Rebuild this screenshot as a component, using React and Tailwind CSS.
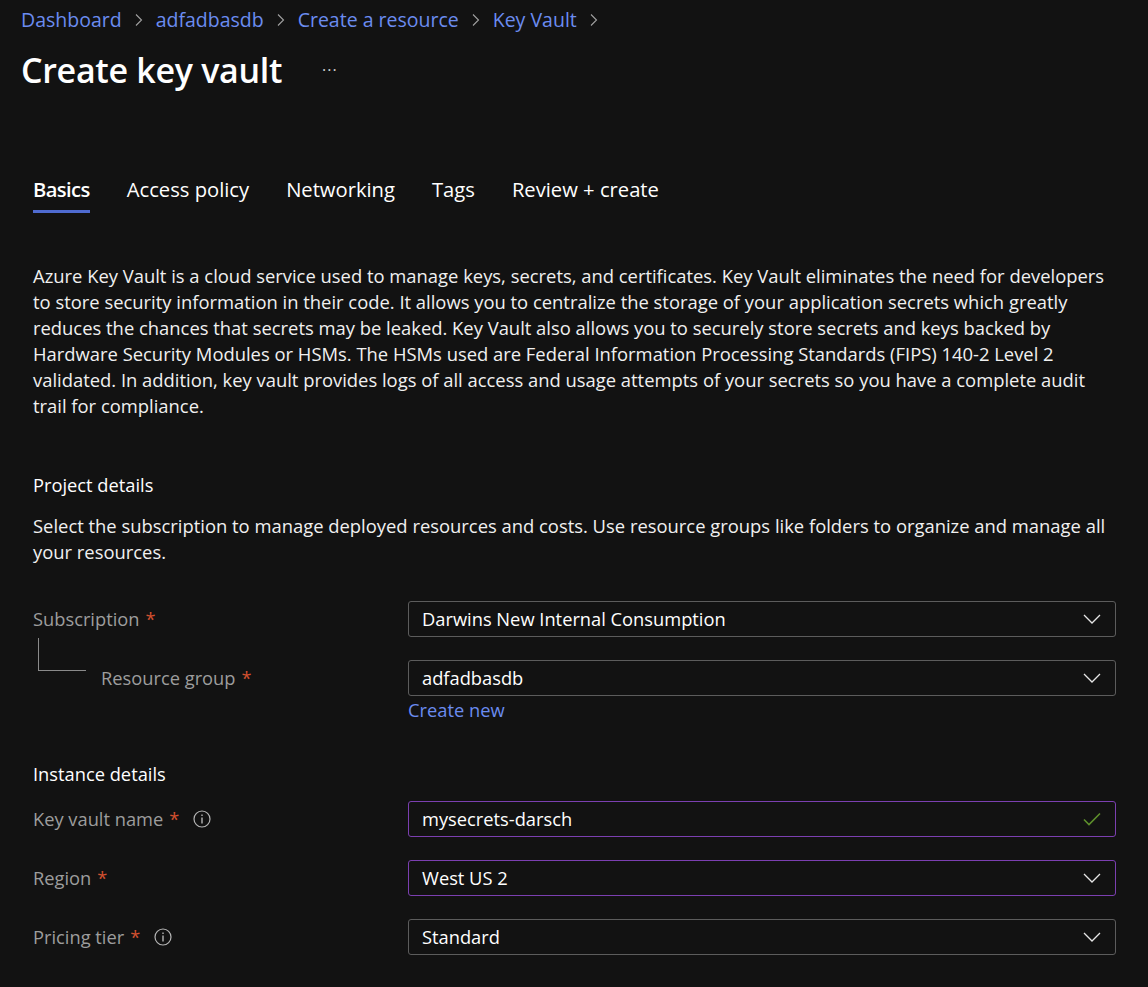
import React from 'react'

const font = { fontFamily: '"Open Sans", "Noto Sans", sans-serif' }

function Chevron() {
  return (
    <svg width="18" height="10" viewBox="0 0 18 10" fill="none" className="shrink-0">
      <path d="M1 1l8 8 8-8" stroke="#e6e6e6" strokeWidth="1.3" />
    </svg>
  )
}

function Check() {
  return (
    <svg width="18" height="14" viewBox="0 0 18 14" fill="none" className="shrink-0">
      <path d="M1 7.5l5 5L17 1.5" stroke="#5e8f2c" strokeWidth="1.6" />
    </svg>
  )
}

function Info() {
  return (
    <svg width="18" height="18" viewBox="0 0 18 18" fill="none" className="shrink-0">
      <circle cx="9" cy="9" r="8" stroke="#b5b5b5" strokeWidth="1.2" />
      <rect x="8.3" y="7.5" width="1.4" height="6" fill="#b5b5b5" />
      <rect x="8.3" y="4.5" width="1.4" height="1.5" fill="#b5b5b5" />
    </svg>
  )
}

function Label({ text, info }) {
  return (
    <div className="flex items-center text-[18.3px] text-[#9d9d9d]">
      <span>{text}</span>
      <span className="ml-[6px] text-[#d2502f]">*</span>
      {info && <span className="ml-[14px] flex"><Info /></span>}
    </div>
  )
}

function Field({ value, purple, check }) {
  return (
    <div
      className={
        'flex h-[36px] items-center justify-between rounded-[3px] border pl-[13px] pr-[14px] text-[18.3px] text-white ' +
        (purple ? 'border-[#7b3fb0]' : 'border-[#5c5c5c]')
      }
    >
      <span>{value}</span>
      {check ? <Check /> : <Chevron />}
    </div>
  )
}

function Sep() {
  return (
    <svg width="10" height="14" viewBox="0 0 10 14" fill="none" className="mx-[12px]">
      <path d="M2 1.5l5.5 5.5L2 12.5" stroke="#a0a0a0" strokeWidth="1.1" />
    </svg>
  )
}

export default function App() {
  const crumbs = ['Dashboard', 'adfadbasdb', 'Create a resource', 'Key Vault']
  const tabs = ['Basics', 'Access policy', 'Networking', 'Tags', 'Review + create']

  return (
    <div className="min-h-screen bg-[#121212] pb-10 text-white" style={font}>
      <div className="px-[21px] pt-[8px]">
        <div className="flex h-[24px] items-center text-[19.5px] text-[#6b8cf0]">
          {crumbs.map((c) => (
            <React.Fragment key={c}>
              <span>{c}</span>
              <Sep />
            </React.Fragment>
          ))}
        </div>
        <div className="mt-[18px] flex h-[40px] items-center">
          <h1 className="text-[34px] font-semibold tracking-[-0.3px]">Create key vault</h1>
          <span className="ml-[40px] text-[16px] tracking-[1px] text-[#cfcfcf]">···</span>
        </div>
      </div>

      <div className="pl-[33px] pr-[32px]">
        <div className="mt-[87px] flex gap-[37px] text-[20.2px]">
          {tabs.map((t, i) => (
            <div key={t} className="flex flex-col">
              <span className={'h-[24px] leading-[24px] ' + (i === 0 ? 'font-semibold tracking-[-0.6px]' : '')}>{t}</span>
              <div className={'mt-[9px] h-[3px] ' + (i === 0 ? 'bg-[#4f6bd0]' : '')} />
            </div>
          ))}
        </div>

        <p className="mt-[50px] text-[18.4px] leading-[26px] text-[#f0f0f0]">
          Azure Key Vault is a cloud service used to manage keys, secrets, and certificates. Key Vault eliminates the need for developers
          <br />
          to store security information in their code. It allows you to centralize the storage of your application secrets which greatly
          <br />
          reduces the chances that secrets may be leaked. Key Vault also allows you to securely store secrets and keys backed by
          <br />
          Hardware Security Modules or HSMs. The HSMs used are Federal Information Processing Standards (FIPS) 140-2 Level 2
          <br />
          validated. In addition, key vault provides logs of all access and usage attempts of your secrets so you have a complete audit
          <br />
          trail for compliance.
        </p>

        <h2 className="mt-[54px] h-[24px] text-[18.3px] leading-[24px]">Project details</h2>
        <p className="mt-[16px] text-[18.4px] leading-[26px] text-[#f0f0f0]">
          Select the subscription to manage deployed resources and costs. Use resource groups like folders to organize and manage all
          <br />
          your resources.
        </p>

        <div className="mt-[36px] grid grid-cols-[375px_1fr] items-center">
          <Label text="Subscription" />
          <Field value="Darwins New Internal Consumption" />
        </div>

        <div className="mt-[23px] grid grid-cols-[375px_1fr] items-start">
          <div className="flex h-[36px] items-center">
            <div className="ml-[5px] mr-[15px] h-[33px] w-[48px] -mt-[22px] self-start border-b border-l border-[#8a8a8a]" />
            <Label text="Resource group" />
          </div>
          <div>
            <Field value="adfadbasdb" />
            <div className="mt-[3px] h-[22px] text-[18.3px] leading-[22px] text-[#6b8cf0]">Create new</div>
          </div>
        </div>

        <h2 className="mt-[41px] h-[24px] text-[18.3px] leading-[24px]">Instance details</h2>

        <div className="mt-[15px] grid grid-cols-[375px_1fr] items-center">
          <Label text="Key vault name" info />
          <Field value="mysecrets-darsch" purple check />
        </div>
        <div className="mt-[23px] grid grid-cols-[375px_1fr] items-center">
          <Label text="Region" />
          <Field value="West US 2" purple />
        </div>
        <div className="mt-[23px] grid grid-cols-[375px_1fr] items-center">
          <Label text="Pricing tier" info />
          <Field value="Standard" />
        </div>
      </div>
    </div>
  )
}
